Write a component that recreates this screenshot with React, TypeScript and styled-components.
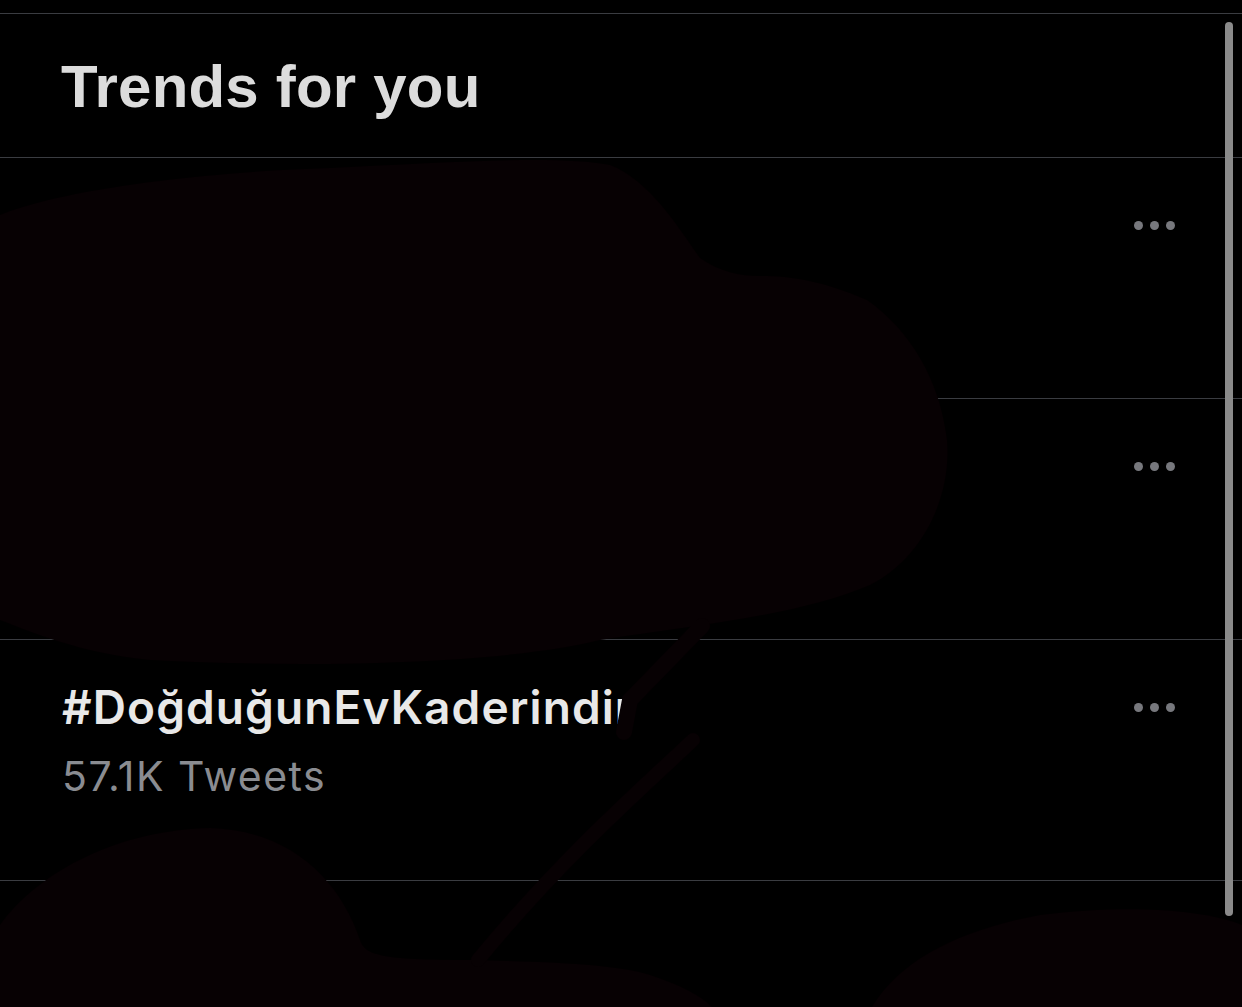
import React from "react";
import styled, { createGlobalStyle } from "styled-components";

const GlobalStyle = createGlobalStyle`
  html, body {
    margin: 0;
    padding: 0;
    background: #000;
  }
  #root {
    width: 1242px;
    height: 1007px;
  }
`;

const Screen = styled.div`
  position: relative;
  width: 1242px;
  height: 1007px;
  overflow: hidden;
  background: #000;
  padding-top: 13px;
  box-sizing: border-box;
`;

const Header = styled.header`
  height: 145px;
  box-sizing: border-box;
  border-top: 1px solid #3a3c41;
  border-bottom: 1px solid #3a3c41;
  display: flex;
  align-items: center;
  padding: 0 0 0 61px;
`;

const Title = styled.h2`
  margin: 0;
  font-family: "Liberation Sans", Arial, sans-serif;
  font-weight: 700;
  font-size: 60px;
  letter-spacing: 0.2px;
  line-height: 1;
  color: #dcdcdc;
  transform: translateY(1px);
`;

const List = styled.div`
  display: flex;
  flex-direction: column;
`;

const TrendRow = styled.div`
  height: 241px;
  box-sizing: border-box;
  border-bottom: 1px solid #3a3c41;
  display: flex;
  align-items: flex-start;
  justify-content: space-between;
  padding: 0 67px 0 62px;
`;

const TrendInfo = styled.div`
  display: flex;
  flex-direction: column;
  padding-top: 41px;
`;

const TrendName = styled.div`
  font-family: "Inter", "Liberation Sans", sans-serif;
  font-weight: 600;
  font-size: 46px;
  letter-spacing: 1.1px;
  line-height: 52px;
  color: #e8e8e8;
  white-space: nowrap;
`;

const TrendCount = styled.div`
  font-family: "Inter", "Liberation Sans", sans-serif;
  font-weight: 400;
  font-size: 41px;
  letter-spacing: 1.5px;
  line-height: 52px;
  margin-top: 17px;
  color: #8a8c91;
  white-space: nowrap;
`;

const MoreButton = styled.div`
  margin-top: 63px;
  display: flex;
  gap: 7px;
`;

const Dot = styled.span`
  width: 9px;
  height: 9px;
  border-radius: 50%;
  background: #77787d;
`;

const Redaction = styled.svg`
  position: absolute;
  inset: 0;
  pointer-events: none;
`;

const Scrollbar = styled.div`
  position: absolute;
  top: 22px;
  left: 1225px;
  width: 8px;
  height: 894px;
  border-radius: 4px;
  background: #8a8a8a;
`;

type Trend = { name: string; count: string };

const trends: Trend[] = [
  { name: "", count: "" },
  { name: "", count: "" },
  { name: "#DoğduğunEvKaderindir", count: "57.1K Tweets" },
  { name: "", count: "" },
];

const More = () => (
  <MoreButton>
    <Dot />
    <Dot />
    <Dot />
  </MoreButton>
);

export default function App() {
  return (
    <>
      <GlobalStyle />
      <Screen>
        <Header>
          <Title>Trends for you</Title>
        </Header>
        <List>
          {trends.map((t, i) => (
            <TrendRow key={i}>
              <TrendInfo>
                <TrendName>{t.name}</TrendName>
                <TrendCount>{t.count}</TrendCount>
              </TrendInfo>
              {i < 3 && <More />}
            </TrendRow>
          ))}
        </List>
        <Scrollbar />
        <Redaction width="1242" height="1007" viewBox="0 0 1242 1007">
          <g fill="#070103">
            <path d="M0,215 C60,190 200,172 330,168 C450,162 560,155 610,165 C650,180 680,230 700,258 C720,272 740,276 760,276 C790,276 820,280 867,300 C910,330 940,380 947,440 C952,500 920,560 870,585 C800,615 700,625 600,640 C500,665 300,668 150,660 C100,655 60,644 0,620 Z" />
            <path d="M0,925 C40,870 120,830 210,828 C290,830 340,880 360,940 C365,955 380,960 470,960 C560,962 620,965 650,975 C680,985 700,995 712,1007 L0,1007 Z" />
            <path d="M872,1007 C900,960 960,930 1040,915 C1120,905 1200,908 1242,925 L1242,1007 Z" />
          </g>
          <g stroke="#070103" fill="none" strokeLinecap="round">
            <path d="M702,626 L630,700 L624,732" strokeWidth="16" />
            <path d="M693,740 C640,790 560,860 478,960" strokeWidth="14" />
          </g>
        </Redaction>
      </Screen>
    </>
  );
}
